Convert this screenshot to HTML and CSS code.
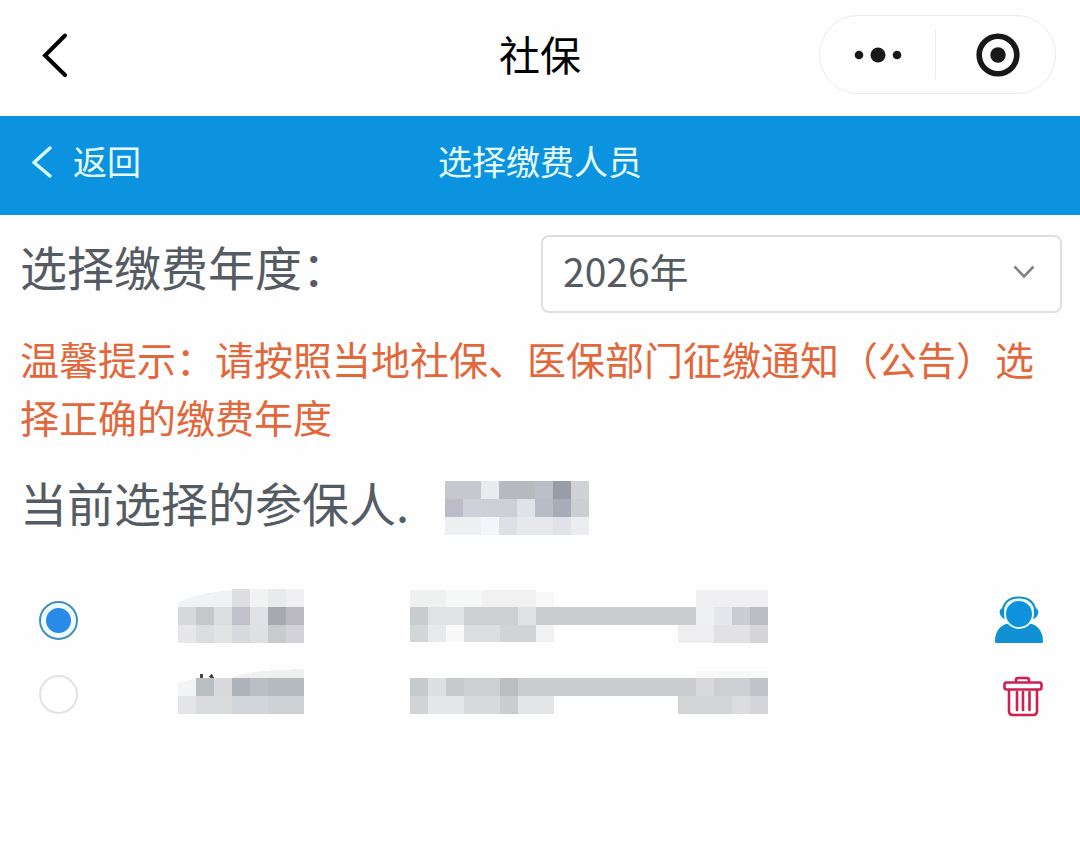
FILE: index.html
```html
<!DOCTYPE html>
<html lang="zh-CN">
<head>
<meta charset="utf-8">
<meta name="viewport" content="width=device-width, initial-scale=1">
<title>社保</title>
<link rel="stylesheet" href="styles.css">
</head>
<body>
<header class="app-header">
  <button class="icon-button app-back" type="button" aria-label="后退">
    <svg width="26" height="44" viewBox="0 0 26 44" fill="none" stroke="#000" stroke-width="4" stroke-linecap="round"><path d="M23 2.500 3 22.500 23 42"/></svg>
  </button>
  <h1 class="app-title">社保</h1>
  <div class="capsule">
    <button class="icon-button capsule-item" type="button" aria-label="更多">
      <svg width="48" height="16" viewBox="0 0 48 16" fill="#181818"><circle cx="5" cy="8" r="4.300"/><circle cx="24" cy="8" r="7.500"/><circle cx="43" cy="8" r="4.300"/></svg>
    </button>
    <button class="icon-button capsule-item" type="button" aria-label="关闭">
      <svg width="44" height="44" viewBox="0 0 44 44"><circle cx="22" cy="22" r="18.800" fill="none" stroke="#181818" stroke-width="5.600"/><circle cx="22" cy="22" r="7.700" fill="#181818"/></svg>
    </button>
  </div>
</header>

<nav class="page-bar">
  <a class="page-back" href="#">
    <svg width="20" height="34" viewBox="0 0 20 34" fill="none" stroke="#d9fbff" stroke-width="3.400" stroke-linecap="round"><path d="M18 4 2 18.500 18 32"/></svg>
    <span>返回</span>
  </a>
  <h2 class="page-title">选择缴费人员</h2>
</nav>

<main class="content">
  <div class="year-row">
    <label class="field-label" for="year">选择缴费年度：</label>
    <div class="select-box">
      <select class="year-select" id="year"><option>2026年</option></select>
      <svg class="select-arrow" width="22" height="14" viewBox="0 0 22 14" fill="none" stroke="#858585" stroke-width="2.600"><path d="M1.500 1.500 11 11.500 20.500 1.500"/></svg>
    </div>
  </div>

  <p class="hint">温馨提示：请按照当地社保、医保部门征缴通知（公告）选择正确的缴费年度</p>

  <div class="current-row">
    <span class="field-label">当前选择的参保人.</span>
    <svg class="mosaic current-name" width="144" height="54" viewBox="0 0 144 54">
      <path fill="#c5c9cd" d="M0 0h36v18H0z"/><path fill="#e9ebee" d="M36 0h18v18H36z"/><path fill="#b6babf" d="M54 0h36v18H54z"/><path fill="#bbc0c8" d="M90 0h18v18H90z"/><path fill="#989da7" d="M108 0h18v18h-18z"/><path fill="#d0d2d8" d="M126 0h18v18h-18z"/>
      <path fill="#bdbbc8" d="M0 18h18v18H0z"/><path fill="#cfd0da" d="M18 18h18v18H18z"/><path fill="#cdd0d5" d="M36 18h36v18H36z"/><path fill="#dfe2e9" d="M72 18h18v18H72z"/><path fill="#b8bcc5" d="M90 18h18v18H90z"/><path fill="#a8acb7" d="M108 18h18v18h-18z"/><path fill="#cccfd2" d="M126 18h18v18h-18z"/>
      <path fill="#eeeff0" d="M0 36h36v18H0z"/><path fill="#f4f5f8" d="M36 36h18v18H36z"/><path fill="#dfe0e3" d="M54 36h18v18H54z"/><path fill="#e6e8eb" d="M72 36h36v18H72z"/><path fill="#e1e2e7" d="M108 36h18v18h-18z"/><path fill="#ecedf0" d="M126 36h18v18h-18z"/>
    </svg>
  </div>

  <ul class="people">
    <li class="person">
      <input class="radio" type="radio" name="person" id="person-1" checked>
      <label class="person-info" for="person-1" aria-label="参保人一">
        <svg class="mosaic" width="126" height="62" viewBox="0 0 126 62">
          <path fill="#f1f2f3" d="M0 18V14C16 4 34 4 54 1v17z"/><path fill="#dedee1" d="M54 0h18v18H54z"/><path fill="#f1f3f3" d="M72 0h18v18H72z"/><path fill="#e8eaeb" d="M90 0h18v18H90z"/><path fill="#f0f0f2" d="M108 0h18v18h-18z"/>
          <path fill="#d7d8da" d="M0 18h18v18H0z"/><path fill="#c4c8cb" d="M18 18h18v18H18z"/><path fill="#dddee1" d="M36 18h18v18H36z"/><path fill="#c2c0ca" d="M54 18h18v18H54z"/><path fill="#e0e1e4" d="M72 18h18v18H72z"/><path fill="#a6a9ad" d="M90 18h18v18H90z"/><path fill="#bbbac0" d="M108 18h18v18h-18z"/>
          <path fill="#e7e7e9" d="M0 36h18v18H0z"/><path fill="#dbddde" d="M18 36h18v18H18z"/><path fill="#e3e3e6" d="M36 36h18v18H36z"/><path fill="#d9dadd" d="M54 36h18v18H54z"/><path fill="#dfe0e2" d="M72 36h18v18H72z"/><path fill="#c8cacd" d="M90 36h18v18H90z"/><path fill="#d3d2d9" d="M108 36h18v18h-18z"/>
        </svg>
        <svg class="mosaic" width="358" height="62" viewBox="0 0 358 62">
          <path fill="#eff0f0" d="M0 1h36v17H0z"/><path fill="#f6f7f7" d="M36 1h36v17H36z"/><path fill="#f1f1f2" d="M72 1h54v17H72z"/><path fill="#f8f8f9" d="M126 3h18v15h-18z"/><path fill="#f0f0f2" d="M286 1h72v17h-72z"/>
          <path fill="#c8ccce" d="M0 18h18v18H0z"/><path fill="#e0e4e7" d="M18 18h36v18H18z"/><path fill="#cecfd2" d="M54 18h54v18H54z"/><path fill="#e0e1e2" d="M108 18h18v18h-18z"/><path fill="#cbccd0" d="M126 18h160v18H126z"/><path fill="#eff0f1" d="M286 18h18v18h-18z"/><path fill="#e5e7ea" d="M304 18h18v18h-18z"/><path fill="#cbcdd2" d="M322 18h18v18h-18z"/><path fill="#bcbec3" d="M340 18h18v18h-18z"/>
          <path fill="#d3d6d7" d="M0 36h18v17H0z"/><path fill="#e7e9eb" d="M18 36h18v17H18z"/><path fill="#f9f9fa" d="M36 36h18v17H36z"/><path fill="#dddee2" d="M54 36h36v17H54z"/><path fill="#d1d3d7" d="M90 36h36v17H90z"/><path fill="#f1f1f3" d="M126 36h18v17h-18z"/><path fill="#eeedf0" d="M268 36h36v18h-36z"/><path fill="#e2e2e5" d="M304 36h36v18h-36z"/><path fill="#d5d5d9" d="M340 36h18v18h-18z"/>
        </svg>
      </label>
      <button class="icon-button" type="button" aria-label="参保人详情">
        <svg width="48" height="48" viewBox="0 0 48 48"><path d="M7.500 15C9 6 15 1.500 24 1.500S39 6 40.500 15" fill="none" stroke="#168fc8" stroke-width="2.200"/><path fill="#1290d4" d="M9 12c-4 0-5 3-4 6 1 3 3 5 6 5zM39 12c4 0 5 3 4 6-1 3-3 5-6 5zM1 47c-1 0-1-1-1-2 0-8 4-15 11-17h26c7 2 11 9 11 17 0 1 0 2-1 2z"/><circle cx="24" cy="18" r="14" fill="#0d92dc" stroke="#e8fbff" stroke-width="2"/></svg>
      </button>
    </li>
    <li class="person">
      <input class="radio" type="radio" name="person" id="person-2">
      <label class="person-info" for="person-2" aria-label="参保人二">
        <svg class="mosaic" width="126" height="50" viewBox="0 0 126 50">
          <path fill="#f3f4f4" d="M0 27V14l18-5v18z"/><path fill="#eff1f1" d="M54 9C72 1 100 1 126 0v9z"/><path fill="#40464a" d="M22 5h3v4h-3zM31 7l3-2 2 4h-4z"/>
          <path fill="#b9bec1" d="M18 9h18v18H18z"/><path fill="#d8dadd" d="M36 9h18v18H36z"/><path fill="#adb3b8" d="M54 9h18v18H54z"/><path fill="#babfc5" d="M72 9h18v18H72z"/><path fill="#b5babe" d="M90 9h36v18H90z"/>
          <path fill="#e4e4e6" d="M0 27h18v18H0z"/><path fill="#d9dbdc" d="M18 27h36v18H18z"/><path fill="#d1d4d9" d="M54 27h36v18H54z"/><path fill="#cfd2d5" d="M90 27h36v18H90z"/>
        </svg>
        <svg class="mosaic" width="358" height="50" viewBox="0 0 358 50">
          <path fill="#f8f8f9" d="M286 2h72v7h-72z"/>
          <path fill="#c7cacd" d="M0 9h18v18H0z"/><path fill="#dddfe3" d="M18 9h18v18H18z"/><path fill="#c7c9cb" d="M36 9h18v18H36z"/><path fill="#cecfd2" d="M54 9h36v18H54z"/><path fill="#babebf" d="M90 9h18v18H90z"/><path fill="#cacccd" d="M108 9h178v18H108z"/><path fill="#dadade" d="M286 9h18v18h-18z"/><path fill="#cecfd3" d="M304 9h36v18h-36z"/><path fill="#c1c3c8" d="M340 9h18v18h-18z"/>
          <path fill="#d1d3d5" d="M0 27h18v18H0z"/><path fill="#e4e6e7" d="M18 27h36v18H18z"/><path fill="#d9dadc" d="M54 27h36v18H54z"/><path fill="#cbccd0" d="M90 27h18v18H90z"/><path fill="#e3e4e6" d="M108 27h36v18h-36z"/><path fill="#d3d4d6" d="M268 27h54v18h-54z"/><path fill="#dcdce0" d="M322 27h18v18h-18z"/><path fill="#d5d5d9" d="M340 27h18v18h-18z"/>
        </svg>
      </label>
      <button class="icon-button" type="button" aria-label="删除">
        <svg width="40" height="46" viewBox="0 0 40 46" fill="none" stroke="#cf1f50" stroke-width="2.600" stroke-linejoin="round" stroke-linecap="round"><path d="M13 11V9q0-2 2-2h9q2 0 2 2v2"/><rect x="1.500" y="11.500" width="37" height="7" rx="2"/><path d="M6 19v21q0 4 4 4h20q4 0 4-4V19M14 21v18M20 21v18M26.500 21v18"/></svg>
      </button>
    </li>
  </ul>
</main>
</body>
</html>
```
FILE: styles.css
```css
* {
  box-sizing: border-box;
}

body {
  margin: 0;
  background: #fefefe;
  color: #555b63;
  font-family: "Noto Sans CJK SC", sans-serif;
}

h1,
h2,
p,
ul {
  margin: 0;
  padding: 0;
  font-weight: 400;
}

svg {
  display: block;
}

.icon-button {
  display: flex;
  align-items: center;
  justify-content: center;
  padding: 0;
  border: 0;
  background: none;
}

.app-header {
  display: grid;
  grid-template-columns: 1fr auto 1fr;
  align-items: center;
  padding: 15px 24px 22px 42px;
}

.app-back {
  justify-self: start;
}

.app-title {
  color: #000;
  font-size: 41px;
  line-height: 60px;
  padding: 0 18px 4px 0;
}

.capsule {
  display: flex;
  justify-self: end;
  width: 237px;
  height: 79px;
  padding: 14px 0;
  border: 1px solid #ececec;
  border-radius: 40px;
}

.capsule-item {
  flex: 1;
}

.capsule-item + .capsule-item {
  padding-left: 4px;
  border-left: 1px solid #ececec;
}

.page-bar {
  display: grid;
  grid-template-columns: 1fr auto 1fr;
  align-items: center;
  padding: 20px 32px 29px;
  background: #0b93df;
  color: #e6fcff;
  font-size: 34px;
  line-height: 50px;
}

.page-back {
  display: flex;
  align-items: center;
  gap: 21px;
  color: inherit;
  text-decoration: none;
}

.page-title {
  font-size: 34px;
}

.content {
  padding: 20px 18px 0 20px;
}

.year-row {
  display: flex;
  align-items: flex-start;
  justify-content: space-between;
}

.field-label {
  font-size: 47px;
  line-height: 62px;
}

.select-box {
  position: relative;
  width: 50%;
}

.year-select {
  appearance: none;
  display: block;
  width: 100%;
  height: 78px;
  padding: 0 60px 8px 20px;
  border: 2px solid #dfdfdf;
  border-radius: 8px;
  background: #fff;
  color: #555b63;
  font-family: inherit;
  font-size: 39px;
}

.select-arrow {
  position: absolute;
  top: 30px;
  right: 27px;
  pointer-events: none;
}

.hint {
  margin-top: 16px;
  color: #e2673a;
  font-size: 39px;
  line-height: 58px;
}

.current-row {
  display: flex;
  align-items: center;
  gap: 36px;
  margin-top: 24px;
}

.current-name {
  margin-top: 12px;
}

.mosaic {
  shape-rendering: crispEdges;
}

.people {
  margin-top: 48px;
  list-style: none;
}

.person {
  display: flex;
  align-items: center;
  height: 74px;
  padding: 0 19px;
}

.radio {
  appearance: none;
  flex: none;
  width: 39px;
  height: 39px;
  margin: 0;
  border: 2px solid #e2e2e2;
  border-radius: 50%;
  background: #fff;
}

.radio:checked {
  border-color: #448fb8;
  background: radial-gradient(circle, #2a8ae8 12px, #f0fdff 13px);
}

.person-info {
  display: flex;
  flex: 1;
  gap: 106px;
  margin-left: 100px;
}
```
